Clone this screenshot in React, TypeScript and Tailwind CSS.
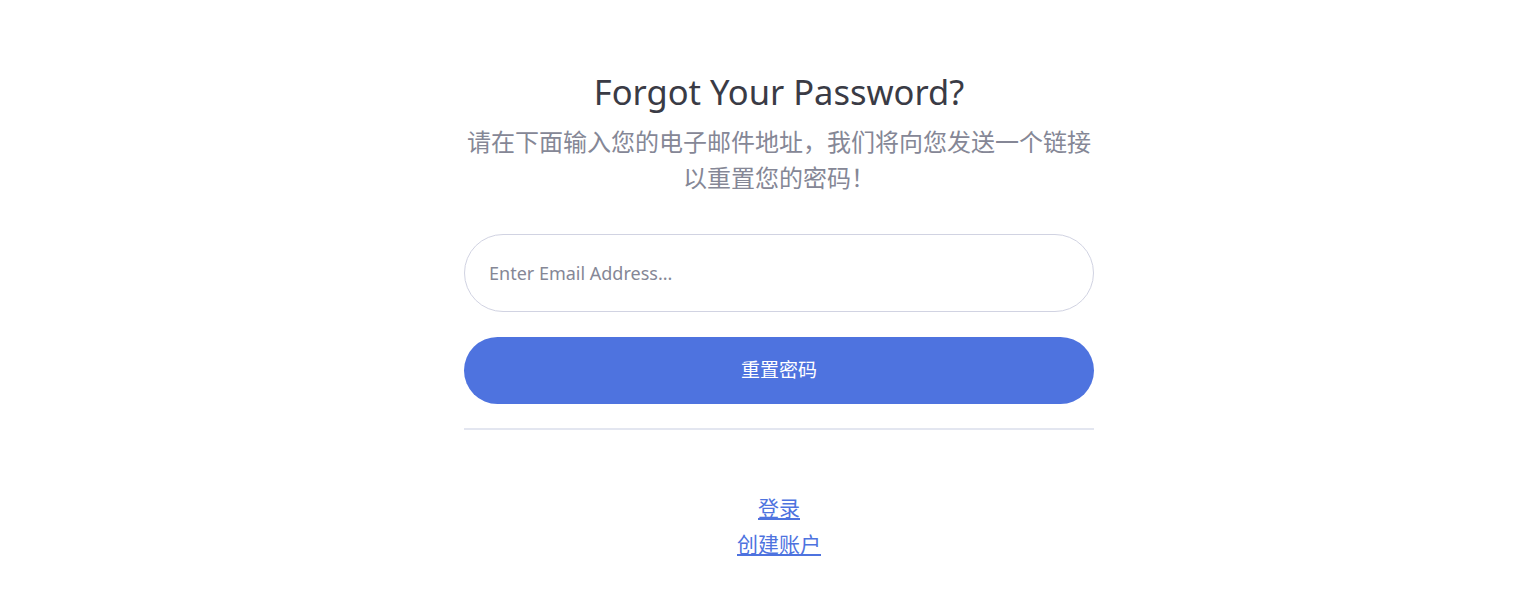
import React from "react";

const FONT = { fontFamily: '"Noto Sans", "Noto Sans CJK SC", sans-serif' };

export default function App() {
  return (
    <main className="min-h-[614px] w-full bg-white pl-[21px]" style={FONT}>
      <div className="mx-auto w-[630px] pt-[66px]">
        <div className="text-center">
          <h1 className="text-[34.5px] leading-[52px] text-[#3a3b45]">Forgot Your Password?</h1>
          <p className="mt-[6px] text-[24px] leading-[36px] text-[#858796]">
            请在下面输入您的电子邮件地址，我们将向您发送一个链接以重置您的密码！
          </p>
        </div>

        <form className="mt-[38px]" onSubmit={(e) => e.preventDefault()}>
          <input
            type="email"
            placeholder="Enter Email Address..."
            className="h-[78px] w-full rounded-full border border-[#d1d3e2] px-[24px] text-[18px] text-[#6e707e] outline-none placeholder:text-[#858796]"
          />
          <button
            type="submit"
            className="mt-[25px] h-[67px] w-full rounded-full bg-[#4e73df] text-[19px] text-white"
          >
            重置密码
          </button>
        </form>

        <hr className="mt-[24px] border-t-2 border-[#e3e6f0]" />

        <div className="mt-[64px] flex flex-col items-center gap-[7px] text-[21px] leading-[29px]">
          <a href="#" className="text-[#4e73df] underline">登录</a>
          <a href="#" className="text-[#4e73df] underline">创建账户</a>
        </div>
      </div>
    </main>
  );
}
